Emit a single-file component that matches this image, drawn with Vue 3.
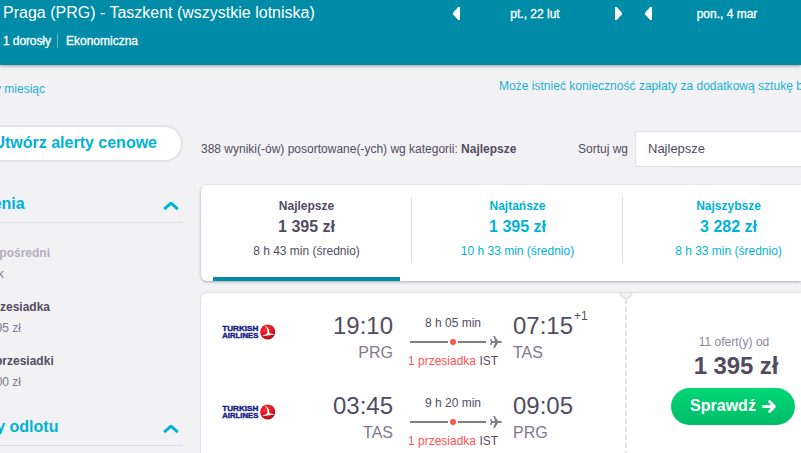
<template>
  <div class="page">
    <header class="search-header">
      <div class="trip">
        <div class="route">Praga (PRG) - Taszkent (wszystkie lotniska)</div>
        <div class="details">
          <span class="people">1 dorosły</span>
          <span class="cabin">Ekonomiczna</span>
        </div>
      </div>
      <div class="date-nav">
        <button class="arrow left" @click="shiftDate(0, -1)"></button>
        <span class="date">{{ formatDate(dates[0]) }}</span>
        <button class="arrow right" @click="shiftDate(0, 1)"></button>
      </div>
      <div class="date-nav second">
        <button class="arrow left" @click="shiftDate(1, -1)"></button>
        <span class="date">{{ formatDate(dates[1]) }}</span>
      </div>
    </header>

    <div class="links">
      <a class="month">cały miesiąc</a>
      <a class="baggage">Może istnieć konieczność zapłaty za dodatkową sztukę bagażu</a>
    </div>

    <div class="content">
      <aside class="sidebar">
        <button class="alert-btn">Utwórz alerty cenowe</button>

        <div v-for="group in filters" :key="group.title" class="group">
          <div class="group-head" @click="group.open = !group.open">
            <span>{{ group.title }}</span>
            <svg class="chevron" :class="{ closed: !group.open }" width="16" height="10" viewBox="0 0 16 10">
              <path d="M1.2 8.2 L8 2.2 L14.8 8.2" fill="none" stroke="#00b2d6" stroke-width="2.9" stroke-linejoin="round" />
            </svg>
          </div>
          <div v-if="group.open" class="options">
            <div v-for="opt in group.options" :key="opt.name" class="option" :class="{ disabled: opt.disabled }">
              <b>{{ opt.name }}</b>
              <span>{{ opt.price }}</span>
            </div>
          </div>
        </div>
      </aside>

      <main class="results">
        <div class="sort-row">
          <div class="count">388 wyniki(-ów) posortowane(-ych) wg kategorii: <b>{{ tabs[activeTab].name }}</b></div>
          <div class="sort-label">Sortuj wg</div>
          <div class="sort-select">{{ tabs[activeTab].name }}</div>
        </div>

        <div class="tabs">
          <div
            v-for="(tab, i) in tabs"
            :key="tab.name"
            class="tab"
            :class="{ active: i === activeTab }"
            @click="activeTab = i"
          >
            <div class="tab-inner">
              <div class="tab-name">{{ tab.name }}</div>
              <div class="tab-price">{{ tab.price }}</div>
              <div class="tab-time">{{ tab.time }}</div>
            </div>
          </div>
        </div>

        <div class="ticket">
          <div class="legs">
            <div v-for="leg in legs" :key="leg.from" class="leg">
              <svg class="logo" width="54" height="16" viewBox="0 0 54 16">
                <defs>
                  <radialGradient id="logoRed" cx="0.4" cy="0.3" r="0.75">
                    <stop offset="0" stop-color="#f4333a" />
                    <stop offset="0.65" stop-color="#dc1420" />
                    <stop offset="1" stop-color="#9c0d14" />
                  </radialGradient>
                </defs>
                <text x="0.3" y="7.1" textLength="36" lengthAdjust="spacingAndGlyphs" class="logo-text">TURKISH</text>
                <text x="0.3" y="13.9" textLength="36" lengthAdjust="spacingAndGlyphs" class="logo-text">AIRLINES</text>
                <circle cx="45.7" cy="7.9" r="7.5" fill="url(#logoRed)" />
                <path d="M42.8 1.7 C46.4 3.2 47.6 6 47.3 9.2 L52.4 10.2 C49.5 11.4 45.5 11.3 39.5 12.1 C41.5 11.2 44 10.5 45.2 9.5 C46.2 7.5 45.3 4.2 42.8 1.7 Z" fill="#fff" />
              </svg>
              <div class="stop depart">
                <div class="time">{{ leg.depart }}</div>
                <div class="code">{{ leg.from }}</div>
              </div>
              <div class="path">
                <div class="duration">{{ leg.duration }}</div>
                <div class="line">
                  <i class="bar"></i>
                  <i class="dot"></i>
                  <i class="bar short"></i>
                  <svg class="plane" width="12" height="12" viewBox="0 0 12 12">
                    <path d="M0 3 H1.2 L2.5 5.1 H5 L3.2 0 H4.8 L8.1 5.1 H10.8 Q12 5.3 12 6 Q12 6.7 10.8 6.9 H8.1 L4.8 12 H3.2 L5 6.9 H2.5 L1.2 9 H0 L0.8 6 Z" fill="#827d8d" />
                  </svg>
                </div>
                <div class="via"><span>1 przesiadka</span> IST</div>
              </div>
              <div class="stop arrive">
                <div class="time">{{ leg.arrive }}<sup v-if="leg.plus">{{ leg.plus }}</sup></div>
                <div class="code">{{ leg.to }}</div>
              </div>
            </div>
          </div>
          <div class="divider">
            <svg class="notch" width="14" height="8" viewBox="0 0 14 8">
              <path d="M0.5 0 A6.3 5.8 0 0 0 13.5 0 Z" fill="#f1f1f4" />
              <path d="M1 0 A6 5.3 0 0 0 13 0" fill="none" stroke="#d9d8df" stroke-width="1" />
            </svg>
          </div>
          <div class="offer">
            <div class="offers">11 ofert(y) od</div>
            <div class="price">1 395 zł</div>
            <button class="go">
              <span>Sprawdź</span>
              <svg width="14" height="13" viewBox="0 0 14 13">
                <path d="M1.4 6.5 H12 M7.6 1.6 L12.4 6.5 L7.6 11.4" fill="none" stroke="#fff" stroke-width="2.8" stroke-linecap="round" stroke-linejoin="round" />
              </svg>
            </button>
          </div>
        </div>
      </main>
    </div>
  </div>
</template>

<script setup>
import { ref } from 'vue'

const days = ['niedz.', 'pon.', 'wt.', 'śr.', 'czw.', 'pt.', 'sob.']
const months = ['sty', 'lut', 'mar', 'kwi', 'maj', 'cze', 'lip', 'sie', 'wrz', 'paź', 'lis', 'gru']

const dates = ref([new Date(2019, 1, 22), new Date(2019, 2, 4)])
const activeTab = ref(0)

const formatDate = (d) => `${days[d.getDay()]}, ${d.getDate()} ${months[d.getMonth()]}`

const shiftDate = (index, step) => {
  const d = new Date(dates.value[index])
  d.setDate(d.getDate() + step)
  dates.value[index] = d
}

const filters = ref([
  {
    title: 'Połączenia',
    open: true,
    options: [
      { name: 'Bezpośredni', price: 'Brak', disabled: true },
      { name: '1 przesiadka', price: '1 395 zł' },
      { name: '2+ przesiadki', price: '1 400 zł' }
    ]
  },
  { title: 'Godziny odlotu', open: true, options: [] }
])

const tabs = [
  { name: 'Najlepsze', price: '1 395 zł', time: '8 h 43 min (średnio)' },
  { name: 'Najtańsze', price: '1 395 zł', time: '10 h 33 min (średnio)' },
  { name: 'Najszybsze', price: '3 282 zł', time: '8 h 33 min (średnio)' }
]

const legs = [
  { from: 'PRG', to: 'TAS', depart: '19:10', arrive: '07:15', plus: '+1', duration: '8 h 05 min' },
  { from: 'TAS', to: 'PRG', depart: '03:45', arrive: '09:05', duration: '9 h 20 min' }
]
</script>

<style>
body { margin: 0; background: #f2f2f5; overflow: hidden; }
</style>

<style scoped>
.page { width: 801px; height: 453px; overflow: hidden; background: #f2f2f5; font-family: "Liberation Sans", Arial, sans-serif; font-size: 12px; color: #524c61; white-space: nowrap; }
button { font-family: inherit; border: none; padding: 0; cursor: pointer; }

.search-header { display: flex; height: 65px; background: #008ca8; color: #fff; box-shadow: 0 1px 3px rgba(0,0,0,0.35); }
.trip { width: 453px; padding-left: 3px; box-sizing: border-box; flex-shrink: 0; }
.route { font-size: 16px; line-height: 18px; padding-top: 4px; }
.details { display: flex; align-items: center; margin-top: 12px; line-height: 14px; -webkit-text-stroke: 0.3px #fff; }
.people { width: 54px; border-right: 1px solid #5fb6c8; letter-spacing: -0.1px; }
.cabin { padding-left: 8px; }
.date-nav { display: flex; align-items: center; width: 169px; height: 27px; flex-shrink: 0; }
.date-nav.second { margin-left: 23px; }
.date { flex: 1; text-align: center; line-height: 14px; padding: 1px 5px 0 0; -webkit-text-stroke: 0.3px #fff; }
.second .date { flex: 0 0 150px; }
.arrow { width: 7px; height: 13px; background: #fff; }
.arrow.left { clip-path: polygon(100% 0, 100% 100%, 75% 100%, 0 55%, 0 45%, 75% 0); }
.arrow.right { clip-path: polygon(0 0, 25% 0, 100% 45%, 100% 55%, 25% 100%, 0 100%); }

.links { display: flex; justify-content: space-between; height: 60px; color: #1ab0d4; }
.month { width: 45px; display: flex; justify-content: flex-end; padding-top: 17px; line-height: 14px; }
.baggage { width: 302px; padding-top: 14px; line-height: 14px; overflow: hidden; letter-spacing: 0.02px; }

.content { display: flex; }
.sidebar { width: 240px; margin-left: -57px; flex-shrink: 0; }
.alert-btn { display: block; width: 240px; height: 37px; box-sizing: border-box; border: 2px solid #e3e2e9; border-radius: 19px; background: #fff; color: #00b2d6; font-size: 16px; font-weight: bold; padding: 0 24px 2px 0; text-align: right; }
.group { height: 223px; }
.group-head { display: flex; align-items: center; justify-content: space-between; height: 61px; box-sizing: border-box; padding: 26px 4px 2px 0; border-bottom: 1px solid #e1e0e8; color: #00b2d6; font-size: 16px; font-weight: bold; cursor: pointer; }
.group-head span { margin-left: -1px; }
.group-head .chevron { margin-top: 3px; }
.chevron.closed { transform: rotate(180deg); }
.options { padding: 23px 0 0 35px; }
.option { height: 54px; display: flex; flex-direction: column; line-height: 14px; gap: 7px; }
.option span { color: #7f7a8b; padding-left: 1px; }
.option.disabled b { color: #b2aebd; }

.results { flex: 1; min-width: 0; margin-left: 18px; }
.sort-row { display: flex; align-items: center; height: 36px; padding-top: 6px; }
.count { width: 377px; }
.sort-label { width: 57px; }
.sort-select { flex: 1; height: 34px; line-height: 33px; border: 1px solid #e1e0e7; border-right: none; border-radius: 3px 0 0 3px; background: #fff; padding-left: 12px; font-size: 13px; }

.tabs { display: flex; height: 96px; margin-top: 18px; background: #fff; border-radius: 6px 0 0 6px; box-shadow: 0 1px 3px rgba(0,0,0,0.3); }
.tab { width: 211px; flex-shrink: 0; height: 96px; box-sizing: border-box; padding-top: 12px; text-align: center; color: #00b2d6; cursor: pointer; }
.tab-inner { height: 66px; border-right: 1px solid #dddce2; padding-left: 1px; }
.tab-name { font-weight: bold; line-height: 14px; padding-top: 2px; }
.tab-price { font-size: 16px; font-weight: bold; line-height: 18px; padding-top: 5px; }
.tab-time { line-height: 14px; padding-top: 8px; }
.tab.active { color: #524c61; }
.tab.active::after { content: ""; display: block; height: 4px; width: 187px; margin: 14px 0 0 12px; background: #008ca8; }

.ticket { display: flex; height: 180px; margin-top: 12px; background: #fff; border-radius: 6px 0 0 0; box-shadow: 0 0 2px rgba(0,0,0,0.25); }
.legs { width: 421px; padding-top: 20px; flex-shrink: 0; }
.leg { display: flex; height: 80px; }
.logo { margin: 11px 0 0 21px; flex-shrink: 0; }
.logo-text { font-size: 7px; font-weight: bold; fill: #15208a; stroke: #15208a; stroke-width: 0.4px; }
.stop { line-height: 18px; }
.depart { width: 117px; text-align: right; }
.time { font-size: 24px; line-height: 26px; display: flex; }
.depart .time { justify-content: flex-end; }
.time sup { font-size: 12px; line-height: 12px; padding-left: 1px; margin-top: -3px; }
.code { font-size: 16px; color: #7f7a8b; padding-top: 5px; }
.path { width: 102px; margin-left: 16px; }
.duration { width: 88px; text-align: center; line-height: 14px; padding-top: 3px; }
.line { display: flex; align-items: center; height: 12px; margin: 6px 0 0 1px; }
.bar { width: 38px; height: 2px; background: #827d8d; }
.bar.short { width: 28px; }
.dot { width: 6px; height: 6px; margin: 0 2px; border-radius: 50%; background: #ff5452; }
.plane { margin-left: 4px; }
.via { line-height: 14px; padding-top: 6px; margin-left: -1px; }
.via span { color: #ff5452; }
.arrive { margin-left: 2px; }
.divider { width: 8px; display: flex; flex-direction: column; align-items: center; background: repeating-linear-gradient(to bottom, #e3e2e9 0, #e3e2e9 5.5px, transparent 5.5px, transparent 8px) 3px 6px / 2px 100% no-repeat; }
.notch { flex-shrink: 0; }
.offer { flex: 1; padding-left: 41px; }
.offers { width: 126px; text-align: center; padding-top: 42px; line-height: 14px; color: #8c8798; }
.price { width: 130px; text-align: center; font-size: 24px; font-weight: bold; line-height: 28px; padding-top: 3px; letter-spacing: -0.1px; }
.go { display: flex; align-items: center; justify-content: center; gap: 6px; width: 124px; height: 37px; margin-top: 8px; border-radius: 19px; background: linear-gradient(#00d775, #00bd68); color: #fff; font-size: 16px; font-weight: bold; }
.go span { padding-bottom: 2px; }
</style>
